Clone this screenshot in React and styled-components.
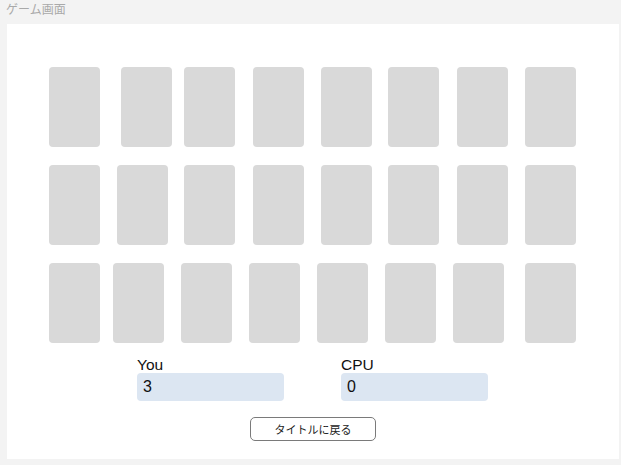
import React from "react";
import styled, { createGlobalStyle } from "styled-components";

const Global = createGlobalStyle`
  html, body {
    margin: 0;
    padding: 0;
    background: #f3f3f3;
    font-family: "Liberation Sans", "Noto Sans CJK JP", sans-serif;
  }
`;

const Screen = styled.div`
  width: 621px;
  height: 465px;
  display: flex;
  flex-direction: column;
  background: #f3f3f3;
`;

const Title = styled.div`
  height: 24px;
  padding-left: 6px;
  font-size: 12px;
  line-height: 18px;
  color: #a9a9a9;
  font-family: "Noto Sans CJK JP", sans-serif;
  box-sizing: border-box;
`;

const Board = styled.div`
  margin-left: 7px;
  width: 612px;
  height: 435px;
  background: #ffffff;
  box-sizing: border-box;
  padding: 43px 0 0 42px;
  display: flex;
  flex-direction: column;
`;

const Table = styled.div`
  display: flex;
  flex-direction: column;
  gap: 18px;
`;

const CardRow = styled.div`
  display: flex;
`;

const Card = styled.div`
  width: 51px;
  height: 80px;
  border-radius: 4px;
  background: #d9d9d9;
  margin-left: ${(p) => p.$offset}px;
  flex: none;
`;

const Scores = styled.div`
  display: flex;
  justify-content: center;
  gap: 57px;
  margin-top: 14px;
  margin-left: -43px;
`;

const Score = styled.div`
  display: flex;
  flex-direction: column;
`;

const Label = styled.div`
  font-size: 15.5px;
  line-height: 16px;
  color: #111;
`;

const Value = styled.div`
  width: 147px;
  height: 28px;
  box-sizing: border-box;
  padding: 0 6px;
  border-radius: 4px;
  background: #dce6f2;
  font-size: 16px;
  line-height: 28px;
  color: #111;
`;

const Footer = styled.div`
  display: flex;
  justify-content: center;
  margin-top: 16px;
  margin-left: -42px;
`;

const BackButton = styled.button`
  width: 126px;
  height: 24px;
  box-sizing: border-box;
  border: 1px solid #7a7a7a;
  border-radius: 5px;
  background: #fff;
  font-family: "Noto Sans CJK JP", sans-serif;
  font-size: 11px;
  color: #222;
  padding: 0;
  cursor: pointer;
`;

const rows = [
  [49, 121, 184, 253, 321, 388, 457, 525],
  [49, 117, 184, 253, 321, 388, 457, 525],
  [49, 113, 181, 249, 317, 385, 453, 525],
];

export default function App() {
  return (
    <>
      <Global />
      <Screen>
        <Title>ゲーム画面</Title>
        <Board>
          <Table>
            {rows.map((xs, r) => (
              <CardRow key={r}>
                {xs.map((x, i) => (
                  <Card key={i} $offset={i === 0 ? 0 : x - (xs[i - 1] + 51)} />
                ))}
              </CardRow>
            ))}
          </Table>
          <Scores>
            <Score>
              <Label>You</Label>
              <Value>3</Value>
            </Score>
            <Score>
              <Label>CPU</Label>
              <Value>0</Value>
            </Score>
          </Scores>
          <Footer>
            <BackButton>タイトルに戻る</BackButton>
          </Footer>
        </Board>
      </Screen>
    </>
  );
}
